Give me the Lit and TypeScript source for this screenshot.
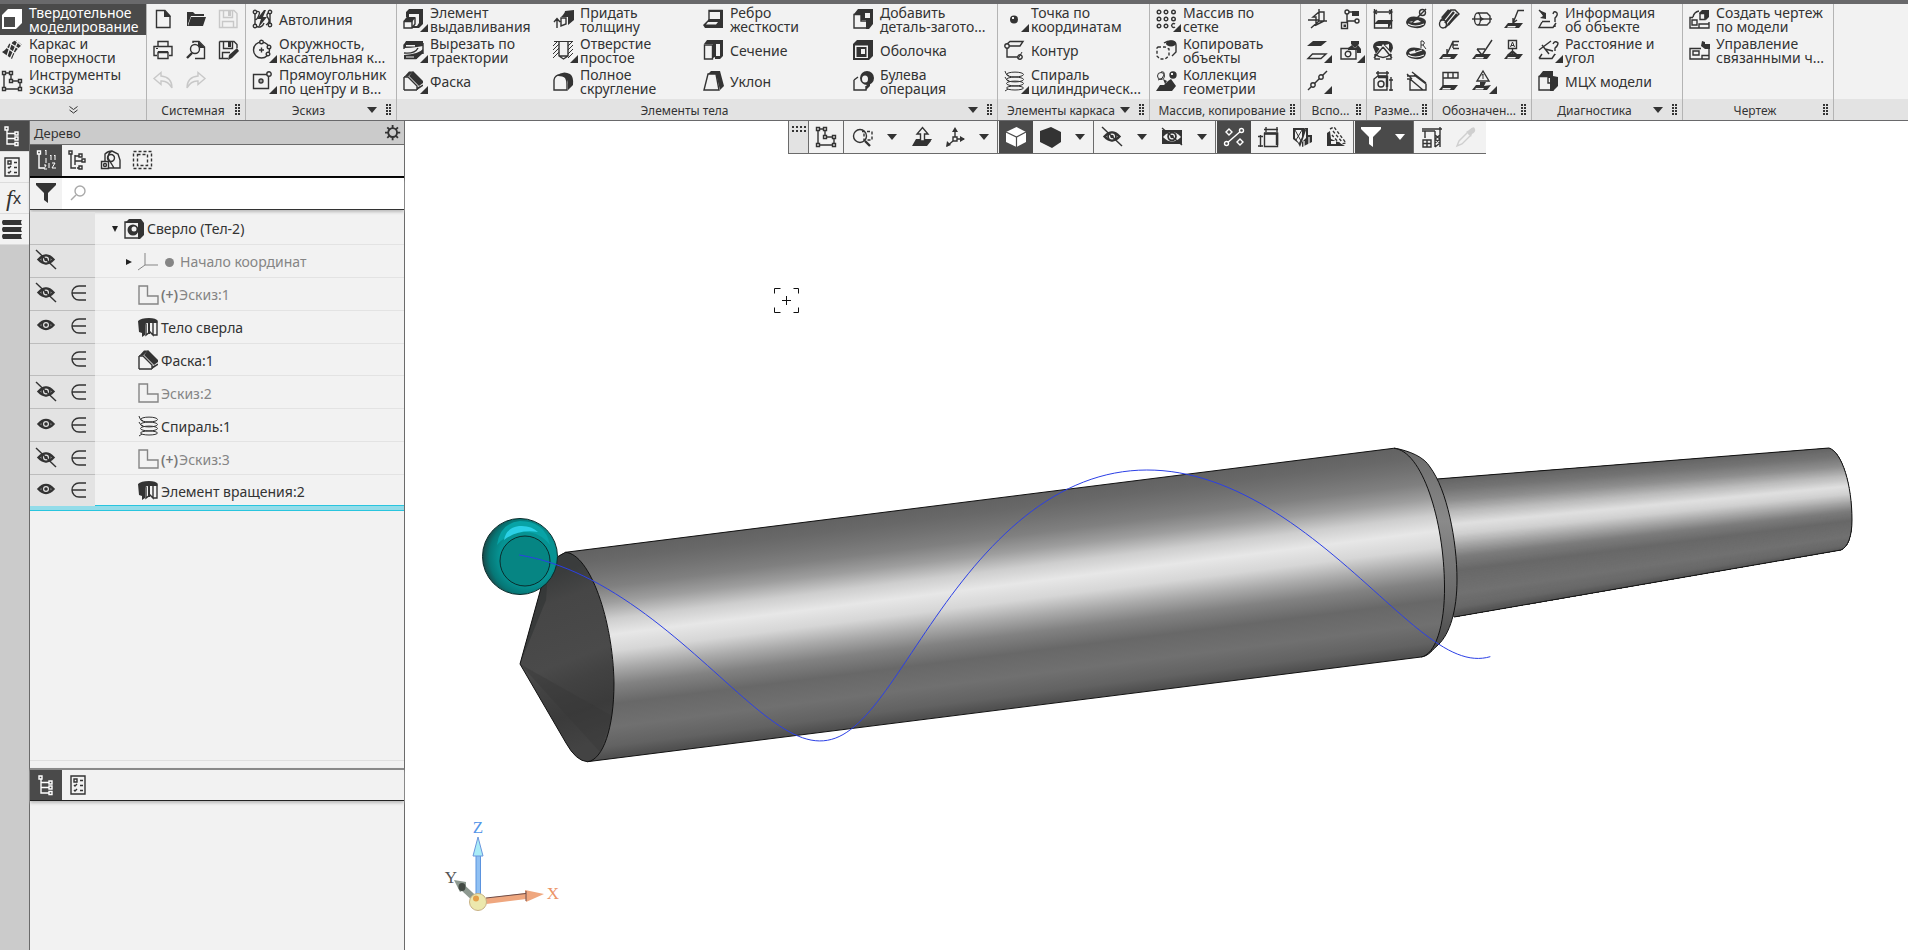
import { LitElement, html, svg, css, nothing } from "lit";
import { customElement, property, state } from "lit/decorators.js";
import { classMap } from "lit/directives/class-map.js";

const c = (x: number, y: number, r: number) =>
  `M${x - r} ${y}a${r} ${r} 0 1 0 ${2 * r} 0a${r} ${r} 0 1 0 ${-2 * r} 0Z`;
const e = (x: number, y: number, rx: number, ry: number) =>
  `M${x - rx} ${y}a${rx} ${ry} 0 1 0 ${2 * rx} 0a${rx} ${ry} 0 1 0 ${-2 * rx} 0Z`;
const r = (x: number, y: number, w: number, h: number) => `M${x} ${y}h${w}v${h}h${-w}Z`;

/* Each layer is [kind, path]: s = stroke, t = thin stroke, w = wide stroke, d = dashed, f = fill,
   b = background fill with stroke, k = background cut-out, g = background stroke */
type Layer = [string, string];
const SLAB = "M0 19L4 14H19L15 19Z";
const ICONS: Record<string, Layer[]> = {
  solid: [["f", "M0 6L6 0H20V14L14 20H0Z"], ["k", r(2, 8, 11, 10)]],
  surface: [
    ["f", "M7 4L14 0L20 5Q13 10 10 19L0 12Q5 9 7 4Z"],
    ["g", "M4 7L14 14M8 3L17 9M10 1L5 16M16 1L8 19M13 0L20 6"],
  ],
  sketch: [["s", "M2 2H9V10H18V18H2Z"], ["b", r(0.5, 0.5, 3, 3) + r(7.5, 0.5, 3, 3) + r(7.5, 8.5, 3, 3) + r(16.5, 8.5, 3, 3) + r(16.5, 16.5, 3, 3) + r(0.5, 16.5, 3, 3)]],
  newdoc: [["s", "M3.500 1.500H12L17 7V18.500H3.500Z"], ["f", "M11 1V8H18Z"]],
  open: [["f", "M1 3H7L9 5H18V7H5L2 15V17H1Z"], ["f", "M5 8H20L17 17H2Z"]],
  save: [["s", "M1.500 1.500H16L19 4.500V18.500H1.500Z"], ["s", "M5.500 2V8.500H14.500V2M4.500 18V12.500H15.500V18"], ["f", r(10, 2, 3, 5)]],
  print: [["s", "M5 6.500V1.500H15V6.500M4 15.500H1V6.500H19V15.500H16M5 12.500H15V18.500H5Z"], ["f", r(3, 8, 2, 1) + r(5, 11, 10, 2)]],
  preview: [["s", "M7 3V1.500H13L18.500 7V18.500H9"], ["f", "M12 1V8H19Z"], ["b", c(9, 9, 4.5)], ["w", "M6 13L1 18"]],
  saveas: [["s", "M1.500 1.500H16L19 4.500V8M1.500 1.500V18.500H10"], ["s", "M5.500 2V8.500H14.500V2M4.500 18V12.500H12"], ["f", r(10, 2, 3, 5)], ["f", "M19 8L21 11L14 18L10 20L11 15Z"]],
  undo: [["s", "M8 1.500L1 7.500L8 13.500V10Q15 9.500 19 17Q19 6 8 5Z"]],
  redo: [["s", "M12 1.500L19 7.500L12 13.500V10Q5 9.500 1 17Q1 6 12 5Z"]],
  autoline: [["s", "M3 3V17M3 3Q9 1 7 6T3 11M3 17Q10 20 12 14M18 3Q13 5 16 9T14 16M18 3V16"], ["b", c(3, 3, 1.7) + c(3, 17, 1.7) + c(18, 3, 1.7) + c(18, 16, 1.7)], ["f", "M12 1L5 10H9L6 19L15 8H11L14 1Z"]],
  circle: [["s", c(9.5, 10, 8)], ["s", "M7 10H12M9.500 7.500V12.500"], ["b", c(9.5, 2, 1.8) + c(17, 7, 1.8) + c(16, 14, 1.8)]],
  rect: [["s", r(1.5, 3.5, 15, 14)], ["b", c(17, 3, 2.2)], ["s", c(9, 10, 2)], ["f", c(9, 10, 0.8)]],
  extrude: [["f", "M3 3L6 0H20V15L16 19H10V17H14L16 14V5H6V8H3Z"], ["s", "M1 12.500H9V19H1ZM1 12.500L4 9H12V15L9 19"], ["f", "M1 12L4 8H12V9L9 13Z"]],
  sweepcut: [["f", "M3 1H20V6L14 7Q8 8 1 8V5Z"], ["s", "M1 9V5L4 2M20 3V14M1 13Q12 14 15 8M1 18.500H13L20 12"], ["f", "M20 9Q16 14 1 15V19H13L20 13Z"], ["k", "M3 5H12V6.500H3ZM3 16.500H11V17.500H3Z"]],
  chamfer: [["s", "M1 19V6M1 19H14M1 6H5L14 15V19"], ["f", "M6 5L10 0L20 10V12L16 15Z"], ["f", "M1 6L6 0.500H10L5 5.500ZM14 19V16.500L20 13.500V15Z"]],
  thickness: [["s", "M4 19V10M1 13L4 9.500L7 13M8 9L13 9V15L8 17Z"], ["f", "M8 8Q12 4 12 2L21 1V11L15 16V8Z"]],
  hole: [["t", "M1 1.500H20M0 6L5 1M0 10L6 4M0 14L6 8M0 18L6 12M15 6L20 1M15 10L20 5M15 14L20 9M15 18L20 13"], ["s", "M6 2V16L10.500 19L15 16V2M6 16H15"]],
  round: [["s", "M1 19V9Q2 3 9 4Q14 5 14 13V19Z"], ["f", "M3 5Q10 -1 17 3Q21 6 20 14L15 19V12Q14 4 3 5Z"]],
  rib: [["s", "M6 1.500H19V12H6Z"], ["f", "M6 1H20V19H2L0 16L6 10H17V3H6Z"], ["k", "M8 3H12L9 10H8ZM14 3H17V10H15ZM3 15.500H13L15 13H5Z"]],
  section: [["f", "M1 4L4 0H20V16L17 19H12V17L10 18V4Z"], ["k", r(2.5, 6, 7, 12) + r(13, 4, 4, 12)], ["s", r(1.5, 5, 8, 14)]],
  draft: [["f", "M5 3L8 0H17L21 15L17 19L13 3Z"], ["s", "M5 3H13L16 19H1Z"]],
  addpart: [["f", "M1 5L5 0H20V15L16 20H13V11H8V5Z"], ["s", "M1 5.500H8V12H15V19H1Z"], ["k", r(12, 4, 5, 5)]],
  shell: [["f", "M0 4L4 0H20V16L16 20H0Z"], ["k", "M2 5.500H15V18H2Z"], ["f", r(3.5, 7, 10, 10)], ["k", r(8, 9, 4, 5)]],
  bool: [["s", "M1 9V19H13V15M1 9L5 6"], ["f", c(14, 7, 7)], ["k", e(12, 8, 3, 3.5)], ["f", "M13 15L17 11V15L13 19Z"]],
  point: [["f", c(10, 10.5, 4)], ["k", r(8, 8, 2, 2)]],
  contour: [["s", "M3 4L6 1.500H19L16 6H3V17H14"], ["b", c(3, 6, 2.2) + c(16, 17, 2.2)], ["t", "M18 12L14 19"]],
  helix: [["t", e(11, 3.5, 8.5, 2.4) + e(11, 8.5, 8.5, 2.4) + e(11, 12.5, 8.5, 2.4) + e(11, 17, 8.5, 2)], ["t", "M1 0Q1 3 5 5M1 6Q2 9 5 10M1 20L4 18"]],
  grid: [["s", c(3, 3, 1.8) + c(10, 3, 1.8) + c(17.5, 3, 1.8) + c(3, 10, 1.8) + c(10, 10, 1.8) + c(17.5, 10, 1.8) + c(3, 17, 1.8) + c(10, 17, 1.8) + "M19 15a2 2 0 1 0 0 3"]],
  copy: [["d", "M2 7H9L13 9V16L9 19H4L1 16V8Z"], ["s", "M8 3Q11 1 15 1Q20 1 20 5V12L16 16"], ["f", e(15, 3.5, 5, 3)]],
  collection: [["t", c(5, 5, 3.5) + "M5 1Q9 0 8 4T2 9"], ["f", c(17, 4, 3.7) + "M0 20L4 14H8L12 10L15 8L20 15L16 20ZM7 8L11 10L9 13Z"], ["k", r(15, 2, 2, 2)]],
  csys: [["s", "M12 0V12H20M12 12L4 19M1 11H12M6 8L12 3H17V12L9 16V8Z"]],
  link: [["s", r(1.5, 13.5, 6, 6) + "M7 13V4M8 3H14M7 12H16"], ["b", c(7, 3, 2) + c(17, 12, 2)], ["f", "M12 2H19V7H12Z" + r(3.5, 15.5, 2.5, 2.5)]],
  planes: [["f", "M6 1H20L14 6H0Z"], ["s", "M5.500 14H19L14 18.500H1Z"]],
  assembly: [["f", "M11 1H19V4L15 8L11 4ZM8 8L12 5L15 9L18 5L21 9V13H17V10H8Z"], ["s", r(1, 8.5, 15, 10.5)], ["s", c(8, 14, 2.8)]],
  nodes: [["s", "M1 19L20 0"], ["b", c(6, 14, 2.2) + c(14, 6, 2.2)]],
  dimlin: [["s", "M1.500 0V19H18.500V0M1 3H19M4 1L1 3L4 5M16 1L19 3L16 5"], ["f", "M1 15L5 11H20L16 19H15V15Z"]],
  dimdia: [["f", "M0 13Q2 6 12 8Q20 9 20 13Q19 20 9 19Q0 18 0 13Z"], ["k", "M3 13L12 11L15 13L9 14Z"], ["g", "M2 15Q9 19 18 15"], ["s", "M6 14L20 0"], ["s", c(16.5, 3.5, 3)]],
  dimang: [["f", "M0 7Q0 2 6 1H14Q20 2 20 8L18 13L10 4L3 14Z"], ["k", "M3 6H8V10ZM12 5L16 4V9Z"], ["s", "M10 7L1 18M10 7L19 18M2 14Q10 21 18 14M2 14V19H7M18 14V19H13"]],
  dimrad: [["f", "M0 13Q2 6 12 8Q20 9 20 13Q19 20 9 19Q0 18 0 13Z"], ["k", "M3 12L9 10L10 13L4 14Z"], ["g", "M2 15Q9 19 18 15M10 12L16 10"], ["t", "M15 8V1H17Q20 3 17 5H15M17 5L20 9"]],
  dimbox: [["s", "M1 19V8L5 5H14V19ZM5 0V5M14 0V5M3 2H16M16 9H20M16 19H20M18 6V20"], ["s", c(8, 13, 3)], ["w", "M5 6H14V16"]],
  dimaux: [["s", "M1 8H4V19H20V13L8 4M6 1L20 12M1 5H9M4 8L17 19M1 3L6 8"]],
  thread: [["w", "M4 11L12 1M6 14L15 3M9 16L18 5M3 9L10 1"], ["s", e(4, 15, 3.5, 4)], ["s", "M1 12L12 1H16L20 5L6 19"]],
  cyl: [["s", e(5.5, 10, 3, 6) + "M6 4H15L18 7V13L15 16H6"], ["s", "M0 10H20"], ["f", "M9 8L12 10L9 12Z"]],
  leader: [["f", SLAB], ["k", "M4 17H12L11 18.500H3Z"], ["s", "M9 14L14 1.500H20M9 14L9 9M9 14L13 11"]],
  base: [["f", SLAB], ["k", "M4 17H12L11 18.500H3Z"], ["s", "M8 14L14 1.500H20M14 1V8M14 5H19M14 8.500H20M8 14L8 9"]],
  rough: [["f", SLAB], ["k", "M4 17H12L11 18.500H3Z"], ["s", "M5 9H13M5 9L10 15L20 0"]],
  datum: [["f", SLAB], ["k", "M4 17H12L11 18.500H3Z"], ["s", r(4.5, 0.5, 8, 8) + "M8.500 9V14M5 14L8.500 11L12 14Z"], ["t", "M6.500 7L8.500 2L10.500 7M7 5.500H10"]],
  tol: [["f", SLAB], ["k", "M4 17H12L11 18.500H3Z"], ["s", "M4 16V1.500H19V7H4M9 2V7M14 2V7"]],
  mark: [["s", "M11 0L17 10H5Z"], ["t", "M11 3V8M10 4.500L11 3"], ["f", "M0 19L4 14H8V11H14L12 15L19 14L15 19Z"], ["k", "M4 17H12L11 18.500H3Z"]],
  info: [["f", "M1 1L8 4L8 10L2 9L5 7Z"], ["s", "M1 1L6 6M4 13L1 18.500H15L18 14M4 12.500H12M15 5Q16 1 19 4Q20 6 17 9V13M17 16V18"]],
  dist: [["s", "M1 10L13 1M4 5L11 14M1 18.500H14L17 14M4 14L1 18.500M7 9L15 11M15 4Q17 0 20 3Q20 6 17 8V11M17 14V15"]],
  mass: [["f", "M1 5L5 0H15V5L20 6V15L15 20H12V7H10V5Z"], ["s", "M1 5.500H10V12H15V19H1Z"]],
  drawing: [["s", "M4 8.500H1V19H20V13M3 11H8V16H3ZM10 19V15H20M4 8Q5 3 10 2"], ["f", "M10 4L13 1H20V8L17 11Z"], ["k", r(11.5, 5, 4, 5)], ["s", r(11, 4.5, 5, 6)]],
  manage: [["s", "M12 8.500H1V19H20V9M13 19V15.500H20"], ["s", r(4, 11, 6, 4)], ["f", "M13 1L16 2V4H21V9H16L12 6Z"]],
  zoomsel: [["s", c(8, 9, 6.5)], ["w", "M13 14L18 19"], ["d", "M10 4.500H20V13H12V5"]],
  normal: [["f", SLAB + "M4 12H20L15 19H0Z"], ["b", "M8.500 14V7H5L10.500 0.500L16 7H12.500V14Z"]],
  axes: [["s", "M10 12V3M10 12H19M8 14L2 19"], ["f", "M10 0L13 5H7ZM20 12L15 9V15ZM1 20L2 14L6 18Z"], ["b", r(8, 10, 4, 4)]],
  cube: [["f", "M10.500 0L20 5V15L10.500 20L0 15V5Z"], ["g", "M0 5L10.500 10L20 5M10.500 10V20"]],
  hex: [["f", "M11 0L21 5V15L12 21L0 15V4Z"]],
  eye: [["w", "M2.500 9Q10 1 17.500 9Q10 17 2.500 9Z"], ["f", c(10, 9, 4.8)], ["k", c(10, 9, 3)], ["f", c(10, 9, 1.8)]],
  eyeoff: [["w", "M2.500 9.500Q10 1.500 17.500 9.500Q10 17.500 2.500 9.500Z"], ["f", c(10, 9.5, 4.8)], ["k", c(10, 9.5, 3)], ["f", c(10, 9.5, 1.8)], ["s", "M0 0L20 19"]],
  hideall: [["f", "M0 3H20V17H0Z"], ["k", "M1 10Q10 0 19 10Q10 19 1 10Z"], ["f", c(10, 9.5, 4.8)], ["k", c(10, 9.5, 3)], ["f", c(10, 9.5, 1.8)], ["s", "M0 1L20 18"]],
  construct: [["s", "M2 17L18 3"], ["b", c(2.5, 16.5, 2) + c(17.5, 3.5, 2)], ["b", "M5 2L8 5L5 8L2 5ZM16 12L19 15L16 18L13 15Z"]],
  dims: [["s", r(6.5, 6.5, 13, 13) + "M8 0V5M19 0V5M6 2.500H20M0 9.500H5M0 19H5M2.500 8V20"], ["w", "M6 6.500H19V18"]],
  cutview: [["f", "M1 1H12L14 3L11 12L8 20L6 16L1 12Z"], ["k", "M3 3H10V10L7 16L3 11Z"], ["t", "M3 3L9 14M10 3L4 13"], ["f", "M12 1H16V8H20V15L10 20V15L14 11V3Z"], ["g", "M12 14L12 19M17 10V17"]],
  texture: [["f", "M1 6L4 4L5 12L12 15L19 19H1Z"], ["k", r(5, 14, 5, 3)], ["d", "M4 2L8 0L20 16L14 17L6 8"], ["d", "M7 4L16 15"]],
  funnel: [["f", "M0 0H20V2L12 10V20L8 17V10L0 2Z"]],
  crane: [["s", "M0 2H20M0 4H13M3 4V9M18 0V20M13 4V20M13 8L18 12M13 12L18 16M18 8L13 12M18 12L13 16M18 16L13 20M1 13H9V20H1ZM1 16.500H9M5 13V20M4 10H2"]],
  pipette: [["f", "M13 3Q18 -2 19 2Q20 5 16 7L15 10L10 5Z"], ["s", "M11 6L3 14L1 19L6 17L14 9"]],
  tree: [["s", "M5 3V18H13M5 7.500H13M5 12.500H13"], ["b", r(3, 1, 3, 3) + r(13, 6, 3, 3) + r(13, 11, 3, 3) + r(13, 16.5, 3, 3)]],
  treenum: [["s", "M3 4V18H8"], ["b", r(1.5, 1, 3, 3)], ["t", "M9 1L10 0V5M10 8V13M8 15H10L8 19H11M14 6L15 5V10M18 6L19 5V10M13 13V18M16 13H19L16 18H20"]],
  treeflow: [["s", "M3 3V18H8M7 5V15M7 6H11M7 11H14M9 18H12"], ["b", r(1, 1, 3, 3) + r(11, 4, 3, 3) + r(14, 9, 3, 3) + r(11, 16, 3, 3)]],
  parts: [["s", "M5 11V4Q8 1 12 1L18 4L20 10V18H9M12 1Q8 3 8 8L14 18"], ["b", r(1.5, 11.5, 7, 7)], ["s", c(5, 15, 1.5) + c(11, 8, 3.5)]],
  selbox: [["d", r(1.5, 1.5, 18, 17)], ["d", r(5.5, 4.5, 10, 11)]],
  props: [["s", r(3, 1, 14, 18)], ["s", r(6, 4, 3, 3) + "M12 5.500H15M12 10.500H15M12 15.500H15M6 10L7 11L9 9M6 15L7 16L9 14"]],
  books: [["f", "M1 1H20Q18 3 20 6H1Q-1 3 1 1ZM1 8H20Q18 10 20 13H1Q-1 10 1 8ZM1 15H20Q18 17 20 20H1Q-1 17 1 15Z"]],
  gear: [["w", c(10, 10, 5.8)], ["w", "M10 0V4M10 16V20M0 10H4M16 10H20M3 3L6 6M14 14L17 17M17 3L14 6M6 14L3 17"]],
  element: [["s", "M17 3H10A7 7 0 0 0 10 17H17M3 10H17"]],
  part: [["f", "M1 4L5 0H17L20 4V16L16 20H14V4Z"], ["s", r(1, 3, 14, 16)], ["f", c(9, 11, 5.5)], ["k", c(10, 10, 2.5)]],
  origin: [["t", "M7 1V13H20M7 13L0 18"]],
  shape: [["s", "M1 1H9.500V11H20V19H1Z"]],
  body: [["f", "M0 3Q3 0 11 0Q18 0 20 3L19 5H12V16H10V5Q7 5 7 8V17L4 19V15L1 14Z"], ["s", "M8 6V17L12 14L15 17V5M15 17H19V4"], ["t", "M11 6V14"]],
  search: [["s", c(12, 8, 5)], ["s", "M8 12L3 17"]],
  dots: [["f", r(0, 0, 2, 2) + r(4, 0, 2, 2) + r(0, 4, 2, 2) + r(4, 4, 2, 2) + r(0, 8, 2, 2) + r(4, 8, 2, 2)]],
};

function icon(name: string) {
  return html`<svg class="ic" viewBox="0 0 21 21" aria-hidden="true">
    ${(ICONS[name] ?? []).map(([k, d]) => svg`<path class=${"p-" + k} d=${d}></path>`)}
  </svg>`;
}

/* Dotted grip: cols × rows of small squares */
function grip(cols: number, rows: number, dx: number, dy: number) {
  let d = "";
  for (let y = 0; y < rows; y++) for (let x = 0; x < cols; x++) d += r(x * dx, y * dy, 2, 2);
  const w = (cols - 1) * dx + 2, h = (rows - 1) * dy + 2;
  return html`<svg class="grip-dots" width=${w} height=${h} viewBox="0 0 ${w} ${h}" aria-hidden="true"><path class="p-f" d=${d}></path></svg>`;
}

const iconStyles = css`
  .ic { width: 21px; height: 21px; flex: none; display: block; overflow: visible; }
  .p-s { fill: none; stroke: currentColor; stroke-width: 1.4; }
  .p-t { fill: none; stroke: currentColor; stroke-width: 1; }
  .p-d { fill: none; stroke: currentColor; stroke-width: 1.4; stroke-dasharray: 3 2; }
  .p-w { fill: none; stroke: currentColor; stroke-width: 2.4; }
  .p-g { fill: none; stroke: var(--cut, #f2f2f2); stroke-width: 1.2; }
  .p-f { fill: currentColor; }
  .p-b { fill: var(--cut, #f2f2f2); stroke: currentColor; stroke-width: 1.4; }
  .p-k { fill: var(--cut, #f2f2f2); }
  button { font: inherit; color: inherit; background: none; border: 0; padding: 0; margin: 0; }
  .tri { width: 0; height: 0; border: 5px solid transparent; border-top: 6px solid currentColor; border-bottom: 0; }
`;

interface Tool { i: string; t?: string; n?: string; more?: boolean; off?: boolean; }
interface Group { name: string; size: string; cols: number; drop?: boolean; tools: Tool[]; }

const GROUPS: Group[] = [
  { name: "Системная", size: "w98", cols: 3, tools: [
    { i: "newdoc", n: "Создать" }, { i: "open", n: "Открыть" }, { i: "save", n: "Сохранить", off: true },
    { i: "print", n: "Печать" }, { i: "preview", n: "Просмотр" }, { i: "saveas", n: "Сохранить как" },
    { i: "undo", n: "Отменить", off: true }, { i: "redo", n: "Повторить", off: true }] },
  { name: "Эскиз", size: "w150", cols: 1, drop: true, tools: [
    { i: "autoline", t: "Автолиния" }, { i: "circle", t: "Окружность,\nкасательная к...", more: true },
    { i: "rect", t: "Прямоугольник\nпо центру и в...", more: true }] },
  { name: "Элементы тела", size: "w600", cols: 4, drop: true, tools: [
    { i: "extrude", t: "Элемент\nвыдавливания", more: true }, { i: "thickness", t: "Придать\nтолщину" },
    { i: "rib", t: "Ребро\nжесткости" }, { i: "addpart", t: "Добавить\nдеталь-загото..." },
    { i: "sweepcut", t: "Вырезать по\nтраектории", more: true }, { i: "hole", t: "Отверстие\nпростое", more: true },
    { i: "section", t: "Сечение" }, { i: "shell", t: "Оболочка" },
    { i: "chamfer", t: "Фаска", more: true }, { i: "round", t: "Полное\nскругление" },
    { i: "draft", t: "Уклон" }, { i: "bool", t: "Булева\nоперация" }] },
  { name: "Элементы каркаса", size: "w151", cols: 1, drop: true, tools: [
    { i: "point", t: "Точка по\nкоординатам", more: true }, { i: "contour", t: "Контур" },
    { i: "helix", t: "Спираль\nцилиндрическ...", more: true }] },
  { name: "Массив, копирование", size: "w150", cols: 1, tools: [
    { i: "grid", t: "Массив по\nсетке", more: true }, { i: "copy", t: "Копировать\nобъекты" },
    { i: "collection", t: "Коллекция\nгеометрии" }] },
  { name: "Вспо...", size: "w65", cols: 2, tools: [
    { i: "csys", n: "Система координат" }, { i: "link", n: "Связь" }, { i: "planes", n: "Плоскость", more: true },
    { i: "assembly", n: "Сборка", more: true }, { i: "nodes", n: "Ось", more: true }] },
  { name: "Разме...", size: "w65", cols: 2, tools: [
    { i: "dimlin", n: "Линейный" }, { i: "dimdia", n: "Диаметральный" }, { i: "dimang", n: "Угловой" },
    { i: "dimrad", n: "Радиальный" }, { i: "dimbox", n: "Габарит" }, { i: "dimaux", n: "Вспомогательный" }] },
  { name: "Обозначен...", size: "w98", cols: 3, tools: [
    { i: "thread", n: "Резьба" }, { i: "cyl", n: "Осевая" }, { i: "leader", n: "Выноска" },
    { i: "base", n: "Клеймо" }, { i: "rough", n: "Шероховатость" }, { i: "datum", n: "База" },
    { i: "tol", n: "Допуск" }, { i: "mark", n: "Марка", more: true }] },
  { name: "Диагностика", size: "w150", cols: 1, drop: true, tools: [
    { i: "info", t: "Информация\nоб объекте" }, { i: "dist", t: "Расстояние и\nугол", more: true },
    { i: "mass", t: "МЦХ модели" }] },
  { name: "Чертеж", size: "w150", cols: 1, tools: [
    { i: "drawing", t: "Создать чертеж\nпо модели" }, { i: "manage", t: "Управление\nсвязанными ч..." }] },
];

@customElement("cad-ribbon")
class CadRibbon extends LitElement {
  @state() private mode = 0;
  static styles = [iconStyles, css`
    :host { display: flex; border-top: 4px solid #69696b; border-bottom: 1px solid #69696b; background: #f2f2f2; height: 116px; overflow: hidden; }
    .modes, .group { display: flex; flex-direction: column; flex: none; border-right: 1px solid #b4b4b4; }
    .modes { width: 146px; }
    .rows, .grid { height: 95px; display: grid; grid-template-rows: repeat(3, 31px); }
    .mode, .tool { display: flex; align-items: center; text-align: left; white-space: pre; line-height: 14px; min-width: 0; position: relative; }
    .mode { gap: 6px; padding-left: 2px; }
    .mode.on { background: #4a4a4a; color: #fff; --cut: #4a4a4a; }
    .foot { height: 21px; display: flex; align-items: center; background: #e3e3e3; font-size: 12px; white-space: nowrap; }
    .foot .name { flex: 1; text-align: center; padding: 3px 0 0 4px; }
    .chev { justify-content: center; }
    .foot .tri { margin-right: 9px; }
    .foot .grip-dots { margin-right: 5px; flex: none; }
    .w98 { width: 98px; } .w150 { width: 150px; } .w151 { width: 151px; } .w65 { width: 65px; } .w600 { width: 600px; }
    .c1 { grid-template-columns: 1fr; } .c2 { grid-template-columns: repeat(2, 1fr); }
    .c3 { grid-template-columns: repeat(3, 1fr); } .c4 { grid-template-columns: repeat(4, 1fr); }
    .tool { padding-left: 6px; gap: 6px; }
    .tool:disabled { color: #c8c8c8; }
    .pic { position: relative; }
    .more { position: absolute; right: -4px; bottom: -2px; border: 4px solid #333; border-top-color: transparent; border-left-color: transparent; }
    .rest { flex: 1; display: flex; flex-direction: column; justify-content: flex-end; }
  `];
  private modes = [["solid", "Твердотельное\nмоделирование"], ["surface", "Каркас и\nповерхности"], ["sketch", "Инструменты\nэскиза"]];
  render() {
    return html`
      <nav class="modes">
        <div class="rows">
          ${this.modes.map(([i, t], n) => html`<button class=${classMap({ mode: true, on: n === this.mode })} @click=${() => (this.mode = n)}>${icon(i)}<span>${t}</span></button>`)}
        </div>
        <button class="foot chev" aria-label="Ещё"><svg width="9" height="8" viewBox="0 0 9 8"><path class="p-t" d="M0.500 0.500L4.500 3.500L8.500 0.500M0.500 4L4.500 7L8.500 4"></path></svg></button>
      </nav>
      ${GROUPS.map((g) => html`
        <section class="group ${g.size}" aria-label=${g.name}>
          <div class="grid c${g.cols}">
            ${g.tools.map((t) => html`<button class="tool" ?disabled=${t.off} aria-label=${t.t ?? t.n ?? ""}>
              <span class="pic">${icon(t.i)}${t.more ? html`<i class="more"></i>` : nothing}</span>${t.t ? html`<span>${t.t}</span>` : nothing}
            </button>`)}
          </div>
          <div class="foot"><span class="name">${g.name}</span>${g.drop ? html`<i class="tri"></i>` : nothing}${grip(2, 4, 3, 3)}</div>
        </section>`)}
      <div class="rest"><div class="foot"></div></div>`;
  }
}

interface Node { i: string; t: string; vis?: "eye" | "eyeoff"; inc?: boolean; dim?: boolean; plus?: boolean; kind?: string; }
const NODES: Node[] = [
  { i: "part", t: "Сверло (Тел-2)", kind: "root" },
  { i: "origin", t: "Начало координат", vis: "eyeoff", dim: true, kind: "origin" },
  { i: "shape", t: "Эскиз:1", vis: "eyeoff", inc: true, dim: true, plus: true },
  { i: "body", t: "Тело сверла", vis: "eye", inc: true },
  { i: "chamfer", t: "Фаска:1", inc: true },
  { i: "shape", t: "Эскиз:2", vis: "eyeoff", inc: true, dim: true },
  { i: "helix", t: "Спираль:1", vis: "eye", inc: true },
  { i: "shape", t: "Эскиз:3", vis: "eyeoff", inc: true, dim: true, plus: true },
  { i: "body", t: "Элемент вращения:2", vis: "eye", inc: true },
];

@customElement("cad-tree")
class CadTree extends LitElement {
  static styles = [iconStyles, css`
    :host { display: flex; flex: none; background: #cbcbcb; }
    .rail { width: 29px; border-right: 1px solid #6b6b6b; display: flex; flex-direction: column; }
    .rail button { height: 31px; display: flex; align-items: center; padding-left: 2px; background: #f2f2f2; border-bottom: 1px solid #dcdcdc; }
    .rail .on, .tab.on { background: #4a4a4a; color: #fff; --cut: #4a4a4a; }
    .rail .fx { font: italic 24px/24px "Liberation Serif", serif; padding-left: 6px; }
    .fx sub { font: 16px/10px "Noto Sans", sans-serif; vertical-align: -5px; }
    .panel { width: 374px; border-right: 1px solid #6b6b6b; display: flex; flex-direction: column; background: #f2f2f2; }
    .head { height: 23px; background: #cbcbcb; border-bottom: 1px solid #6b6b6b; display: flex; align-items: center; justify-content: space-between; padding: 0 3px 0 4px; font-size: 13px; --cut: #cbcbcb; }
    .head .ic { width: 16px; height: 16px; }
    .tabs { display: flex; height: 31px; }
    .tab { width: 32px; display: grid; place-items: center; }
    .types { border-bottom: 2px solid #000; }
    .find { display: flex; height: 31px; border-bottom: 1px solid #333; background: #fff; box-shadow: 0 2px 3px #bbb; margin-bottom: 2px; }
    .find .tab { background: #f2f2f2; }
    .find label { display: flex; flex: 1; align-items: center; padding-left: 6px; color: #a9a9a9; --cut: #fff; }
    .find input { flex: 1; border: 0; outline: 0; background: none; font: inherit; color: #333; }
    .list { display: grid; grid-template-rows: repeat(8, 33fr) 30fr; height: 293px; border-bottom: 1px solid #29c5de; }
    .row { display: flex; border-bottom: 1px solid #e3e3e3; min-height: 0; }
    .row:last-child { border-bottom: 0; }
    .state { width: 65px; display: grid; grid-template-columns: 33px 32px; place-items: center; background: #e3e3e3; border-bottom: 1px solid #bdbdbd; margin-bottom: -1px; --cut: #e3e3e3; }
    .row:last-child .state { border-bottom: 0; }
    .node { display: flex; align-items: center; gap: 2px; padding: 3px 0 0 43px; white-space: nowrap; font-size: 14px; }
    .node.root { padding-left: 17px; gap: 2px; }
    .node.origin { padding-left: 31px; gap: 6px; }
    .dim .lab, .dim .ic { color: #858585; }
    .open { border: 3px solid transparent; border-top: 6px solid #222; border-bottom: 0; margin-right: 4px; }
    .shut { border: 3px solid transparent; border-left: 6px solid #222; border-right: 0; }
    .dot { width: 9px; height: 9px; border-radius: 50%; background: #858585; }
    .plus { font-weight: 600; color: #777; margin-right: 1px; }
    .band { height: 4px; background: #93dce9; border-bottom: 1px solid #29c5de; }
    .gap { flex: 1; border-bottom: 1px solid #e0e0e0; }
    .lower { margin-top: 7px; border-top: 2px solid #8a8a8a; border-bottom: 1px solid #222; box-shadow: 0 2px 3px #bbb; height: 30px; }
    .info { height: 149px; }
  `];
  render() {
    return html`
      <div class="rail">
        <button class="on" aria-label="Дерево">${icon("tree")}</button>
        <button aria-label="Параметры">${icon("props")}</button>
        <button class="fx" aria-label="Переменные">f<sub>x</sub></button>
        <button aria-label="Библиотеки">${icon("books")}</button>
      </div>
      <aside class="panel">
        <div class="head"><span>Дерево</span><button aria-label="Настройка">${icon("gear")}</button></div>
        <div class="tabs types">
          ${["treenum", "treeflow", "parts", "selbox"].map((i, n) => html`<button class=${classMap({ tab: true, on: n === 0 })} aria-label="Вид дерева ${n + 1}">${icon(i)}</button>`)}
        </div>
        <div class="find"><button class="tab" aria-label="Фильтр">${icon("funnel")}</button><label>${icon("search")}<input type="text" aria-label="Поиск" /></label></div>
        <div class="list" role="tree">
          ${NODES.map((n) => html`<div class="row" role="treeitem">
            <div class="state"><span>${n.vis ? icon(n.vis) : nothing}</span><span>${n.inc ? icon("element") : nothing}</span></div>
            <div class=${classMap({ node: true, dim: !!n.dim, [n.kind ?? "leaf"]: true })}>
              ${n.kind === "root" ? html`<i class="open"></i>` : n.kind === "origin" ? html`<i class="shut"></i>` : nothing}
              ${icon(n.i)}${n.kind === "origin" ? html`<i class="dot"></i>` : nothing}
              <span class="lab">${n.plus ? html`<span class="plus">(+)</span>` : nothing}${n.t}</span>
            </div>
          </div>`)}
        </div>
        <div class="band"></div>
        <div class="gap"></div>
        <div class="tabs lower"><button class="tab on" aria-label="Структура">${icon("tree")}</button><button class="tab" aria-label="Свойства">${icon("props")}</button></div>
        <div class="info"></div>
      </aside>`;
  }
}

type Pt = [number, number];

/* Helix around the drill axis: steady advance plus a rotating radius, projected to the view plane */
function helixPath() {
  const from = -0.442, to = 1.016, n = 160;
  let d = "";
  for (let k = 0; k <= n; k++) {
    const t = from + ((to - from) * k) / n, a = 2 * Math.PI * t;
    const x = 811 + 658 * t + 14.4 * Math.cos(a) - 35 * Math.sin(a);
    const y = 626.6 - 82.5 * t + 114 * Math.cos(a) + 4.4 * Math.sin(a);
    d += `${k ? "L" : "M"}${x.toFixed(2)} ${y.toFixed(2)}`;
  }
  return d;
}

/* Grey levels across a lit cylinder, from its upper to its lower edge */
const SHADE: Pt[] = [[0, 98], [0.06, 104], [0.12, 114], [0.19, 128], [0.265, 158], [0.345, 206], [0.42, 231], [0.5, 214], [0.58, 170], [0.66, 130], [0.75, 104], [0.86, 112], [0.95, 98], [1, 80]];
const SHANK: Pt[] = [[0, 96], [0.1, 116], [0.18, 142], [0.26, 185], [0.35, 224], [0.42, 208], [0.5, 165], [0.58, 124], [0.68, 104], [0.84, 113], [0.94, 104], [1, 82]];
function level(s: Pt[], f: number) {
  const i = Math.max(1, s.findIndex(([x]) => x >= f));
  const [x0, v0] = s[i - 1], [x1, v1] = s[i];
  return Math.round(v0 + ((v1 - v0) * (f - x0)) / (x1 - x0));
}
function shankBands() {
  const n = 110;
  return Array.from({ length: n }, (_, k) => {
    const f = k / n, g = level(SHANK, f);
    const l = 476 + 144 * f, q = 442 + 106 * f + 6 * Math.sin(Math.PI * f);
    return svg`<path fill=${`rgb(${g},${g},${g})`} d=${`M1425 ${l}L1860 ${q}V620H1425Z`}></path>`;
  });
}

@customElement("cad-scene")
class CadScene extends LitElement {
  static styles = css`
    :host { display: block; }
    svg { display: block; width: 100%; height: 100%; }
    .edge { fill: none; stroke: #111; stroke-width: 1; }
    .axis { font: 17px "Liberation Serif", serif; text-anchor: middle; }
  `;
  render() {
    return html`<svg viewBox="405 121 1503 829" preserveAspectRatio="xMinYMin meet" role="img" aria-label="Сверло">
      <defs>
        <linearGradient id="cyl" gradientUnits="userSpaceOnUse" x1="565.500" y1="552" x2="591.500" y2="759">
          ${SHADE.map(([o, g]) => svg`<stop offset=${o} stop-color=${`rgb(${g},${g},${g})`}></stop>`)}
        </linearGradient>
        <linearGradient id="cone" gradientUnits="userSpaceOnUse" x1="540" y1="580" x2="600" y2="740">
          <stop offset="0" stop-color="#3a3c3c"></stop><stop offset=".15" stop-color="#464646"></stop>
          <stop offset=".5" stop-color="#4a4a4a"></stop><stop offset=".62" stop-color="#424242"></stop>
          <stop offset=".8" stop-color="#3b3b3b"></stop><stop offset="1" stop-color="#434343"></stop>
        </linearGradient>
        <linearGradient id="rim" x1="0" y1="0" x2="0" y2="1">
          <stop offset="0" stop-color="#6a6a6a"></stop><stop offset=".35" stop-color="#8a8a8a"></stop>
          <stop offset=".7" stop-color="#6a6a6a"></stop><stop offset="1" stop-color="#444"></stop>
        </linearGradient>
        <radialGradient id="disc" cx=".6" cy=".5" r=".62">
          <stop offset=".6" stop-color="#069393"></stop><stop offset=".82" stop-color="#067776"></stop><stop offset="1" stop-color="#1f3d3d"></stop>
        </radialGradient>
        <clipPath id="shank"><path d="M1437 479L1829 448C1842 452 1852 485 1852 520C1852 536 1848 547 1841 550L1454 617L1440 560Z"></path></clipPath>
      </defs>

      <g clip-path="url(#shank)">${shankBands()}</g>
      <path class="edge" d="M1437 479L1829 448C1842 452 1852 485 1852 520C1852 536 1848 547 1841 550L1454 617"></path>

      <path fill="url(#rim)" stroke="#111" d="M1394 448C1410 451 1424 457 1430 467C1447 490 1457 540 1457 580C1457 610 1450 634 1438 645C1432 650 1429 656 1421 657Z"></path>
      <path fill="url(#cyl)" stroke="#111" d="M565.500 552.300L1393.500 448.300C1422 450 1444 520 1444.500 586C1445 626 1435 655 1421 657L587.500 761.700Z"></path>

      <path fill="url(#cone)" d="M520 664L541 588Q549 558 565.500 552.300C590 554 613 620 614 683C614 728 603 760 587.500 761.700Q576 761 566 743Z"></path>
      <path fill="#2c3030" opacity=".5" d="M520 664L541 588L548 570L546 600Z"></path>
      <path fill="#363636" opacity=".4" d="M520 664L612 716L600 752Z"></path>
      <path class="edge" d="M520 664L541 588Q549 558 565.500 552.300C590 554 613 620 614 683C614 728 603 760 587.500 761.700Q576 761 566 743Z"></path>

      <ellipse cx="520" cy="556.500" rx="37.500" ry="38" fill="url(#disc)" stroke="#0b2c2c"></ellipse>
      <path fill="#08a3a6" d="M497 545Q500 523 520 521Q545 521 550 545Q540 532 524 532Q506 534 497 545Z"></path>
      <path fill="#2bd0e6" d="M504 540Q506 528 519 526Q531 525 538 532Q518 529 504 540Z"></path>
      <circle cx="525" cy="561" r="25" fill="#068583" stroke="#0b2c2c"></circle>

      <path fill="none" stroke="#2b3fe6" d=${helixPath()}></path>

      <g class="edge">
        <path d="M774.500 293.500V288.500H780.500M793.500 288.500H798.500V293.500M798.500 307.500V312.500H793.500M780.500 312.500H774.500V307.500M782 300.500H791M786.500 296V305"></path>
      </g>

      <path stroke="#8d9990" stroke-width="6" d="M474 898L460 885"></path>
      <path fill="#8d9990" d="M454 880L466 882L466 889L460 892Z"></path>
      <ellipse cx="462" cy="887" rx="3.500" ry="4" fill="#434a44"></ellipse>
      <path fill="#8fc0f3" stroke="#5b93de" d="M476 855H480.500V894H476Z"></path>
      <path fill="#a9ecf7" stroke="#6b96dd" d="M478 837L483 856H473Z"></path>
      <path stroke="#efa77f" stroke-width="6" d="M486 901L526 896"></path>
      <path fill="#efa77f" d="M525 890L544 894L526 902Z"></path>
      <path fill="none" stroke="#6e4d48" stroke-width="1" d="M486 898L526 893.500M526 891V901"></path>
      <circle cx="478" cy="902" r="8.500" fill="#ece8ad" stroke="#c8b184"></circle>
      <circle cx="476" cy="898.500" r="3" fill="#e5a04a"></circle>
      <text class="axis" x="478" y="833" fill="#5596e8">Z</text>
      <text class="axis" x="553" y="899" fill="#ec9467">X</text>
      <text class="axis" x="451" y="883" fill="#555">Y</text>
    </svg>`;
  }
}

/* View bar entries: icon name, "v" for a drop-down arrow, "|" for a divider */
const VIEW: [string, string?][] = [
  ["sketch", "b34"], ["|"], ["zoomsel", "b34"], ["v"], ["normal", "b34"], ["axes", "b32"], ["v"], ["|"],
  ["cube", "on b34"], ["hex", "b34"], ["v"], ["|"], ["eyeoff", "b34"], ["v"], ["hideall", "b34"], ["v"], ["|"],
  ["construct", "on b34"], ["dims", "b34"], ["cutview", "b34"], ["texture", "b34"], ["|"],
  ["funnel", "on b32"], ["v", "on"], ["|"], ["crane", "b34"], ["pipette", "off b34"],
];

@customElement("cad-viewbar")
class CadViewbar extends LitElement {
  @property() label = "Вид";
  static styles = [iconStyles, css`
    :host { display: flex; height: 32px; padding-right: 3px; background: #f2f2f2; border-left: 1px solid #6b6b6b; border-bottom: 1px solid #6b6b6b; }
    .grip { width: 19px; background: #e3e3e3; border-right: 1px solid #6b6b6b; display: flex; justify-content: center; align-items: flex-start; padding-top: 5px; box-sizing: content-box; height: 27px; }
    button { display: grid; place-items: center; }
    .b32 { width: 32px; } .b34 { width: 34px; }
    .drop { width: 26px; }
    .bar { width: 1px; background: #6b6b6b; margin-right: 1px; }
    .on { background: #4a4a4a; color: #fff; --cut: #4a4a4a; }
    .off { color: #cfcfcf; }
  `];
  render() {
    return html`<div class="grip">${grip(4, 2, 4, 4)}</div>
      ${VIEW.map(([n, k]) => n === "|" ? html`<i class="bar"></i>`
        : n === "v" ? html`<button class="drop ${k ?? ""}" aria-label="Список"><i class="tri"></i></button>`
        : html`<button class=${k ?? ""} aria-label=${n}>${icon(n)}</button>`)}`;
  }
}

@customElement("app-root")
class AppRoot extends LitElement {
  static styles = css`
    :host { display: flex; flex-direction: column; min-height: 100vh; font: 14px/18px "Noto Sans", "Open Sans", sans-serif; color: #333; background: #fff; overflow: hidden; }
    .work { display: flex; flex: 1; }
    .view { flex: 1; min-width: 0; position: relative; background: #fff; }
    .view cad-viewbar { position: absolute; top: 0; left: 383px; }
  `;
  render() {
    return html`<cad-ribbon></cad-ribbon>
      <main class="work"><cad-tree></cad-tree>
        <div class="view"><cad-scene></cad-scene><cad-viewbar></cad-viewbar></div>
      </main>`;
  }
}
